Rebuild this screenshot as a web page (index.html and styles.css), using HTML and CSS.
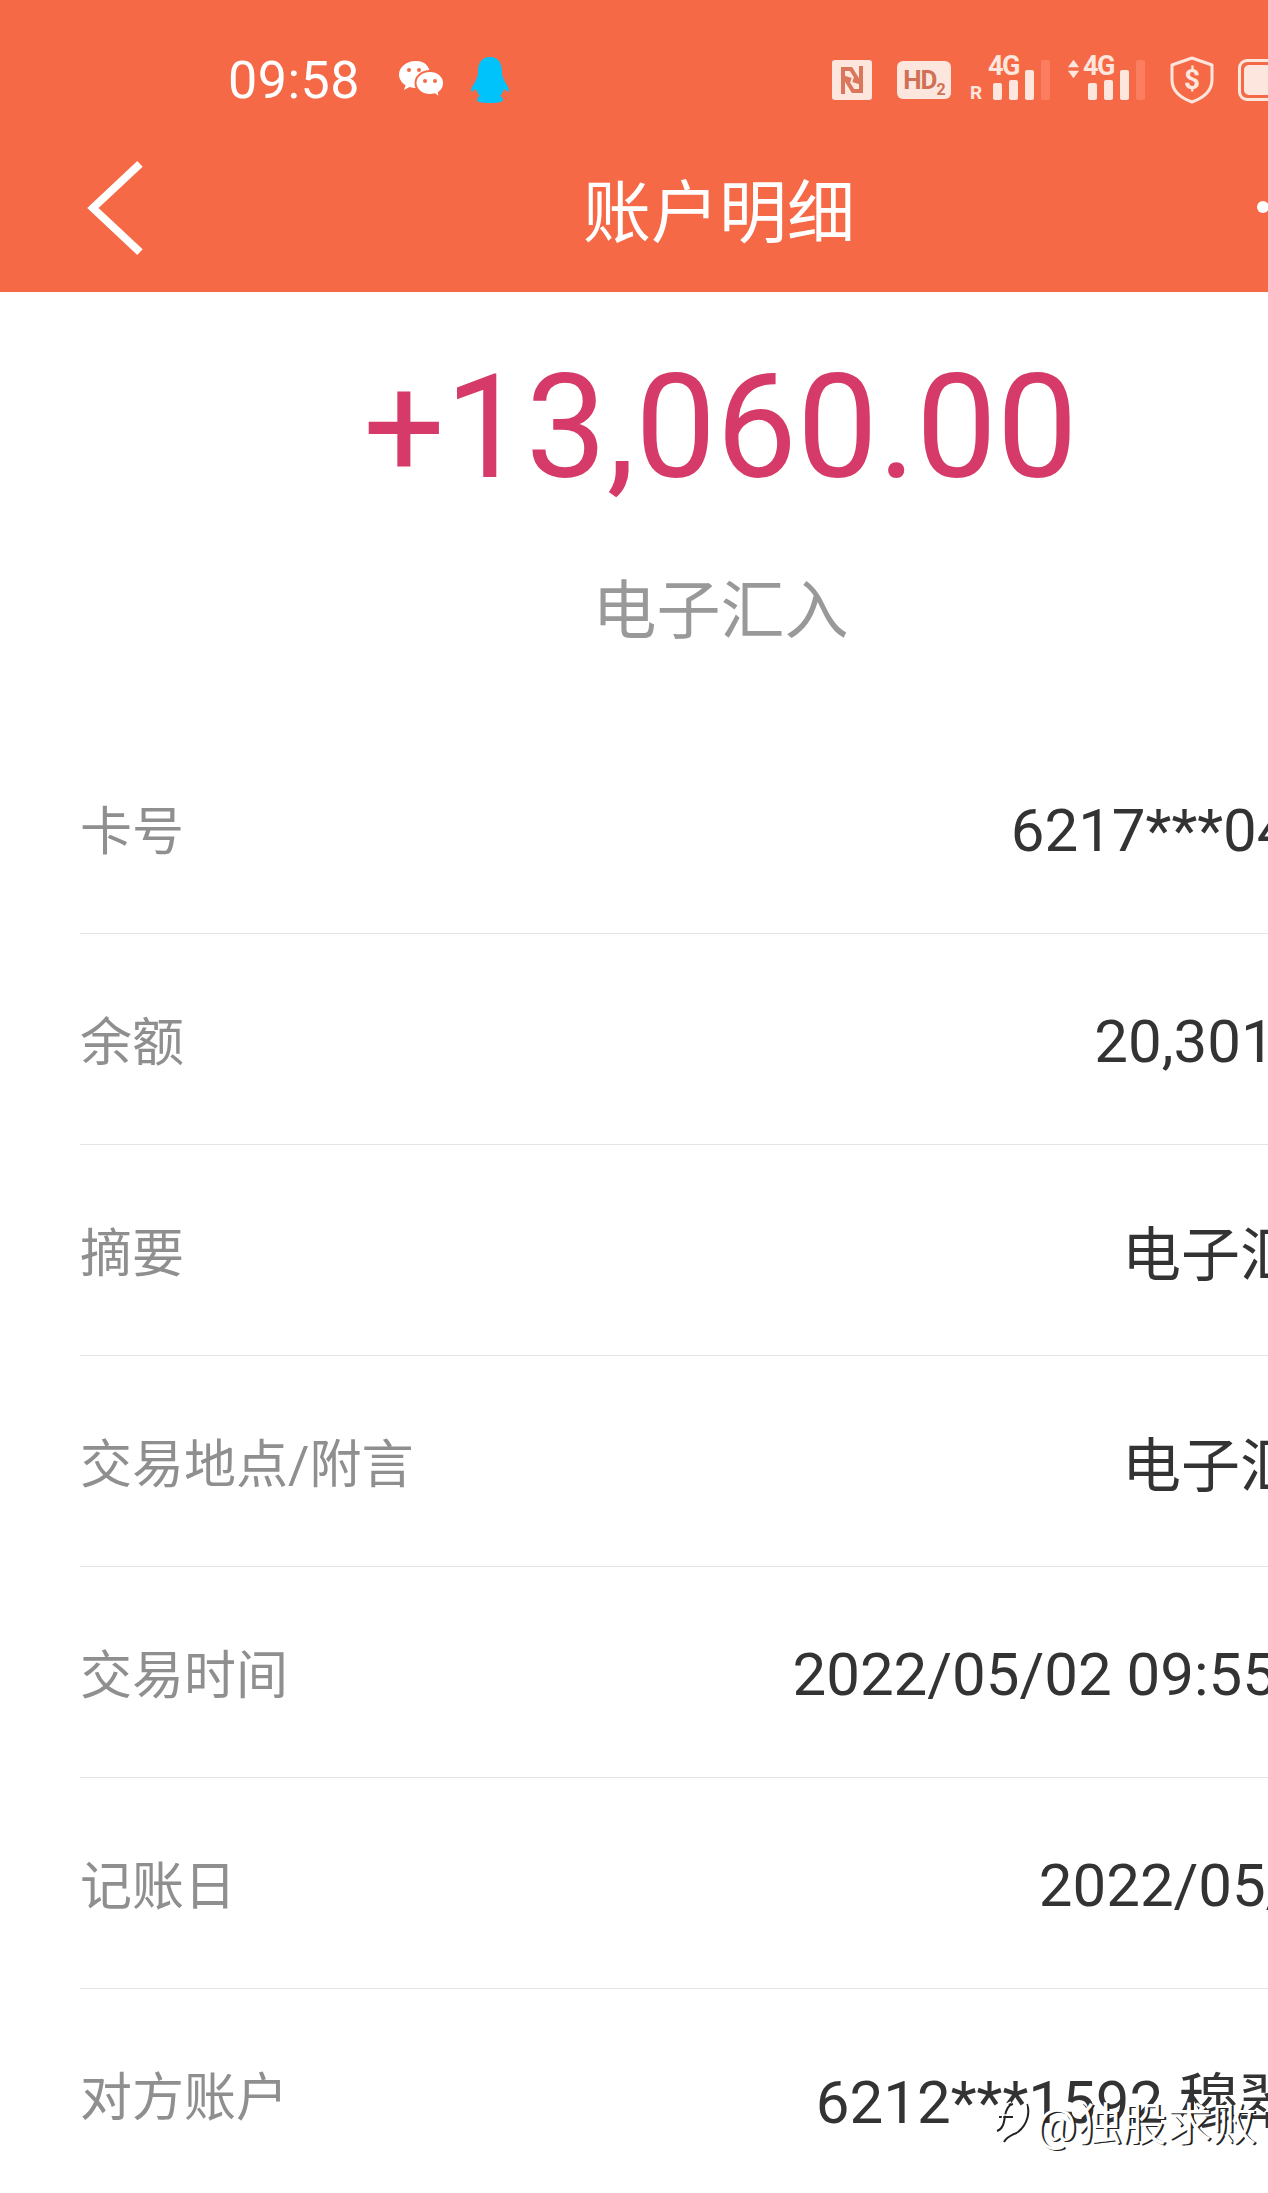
FILE: index.html
```html
<!DOCTYPE html>
<html lang="zh-CN">
<head>
    <meta charset="UTF-8">
    <title>账户明细</title>
    <link rel="stylesheet" href="styles.css">
</head>
<body>
    <div class="screen">
        <div class="header">
            <div class="statusbar">
                <div class="status-left">
                    <span class="time">09:58</span>
                    <svg class="ic-wechat" viewBox="0 0 45 38">
                        <path fill="#fff" d="M17 0C7.600 0 0 6 0 13.600c0 4.400 2.600 8.300 6.600 10.800L4.800 29l6-3c2 .6 3.900.9 6.200.9 9.400 0 14-6 14-13.300C31 6 26.400 0 17 0z"/>
                        <path fill="#fff" stroke="#f56946" stroke-width="2" d="M31 10c-8 0-14.500 5.300-14.500 12S23 34 31 34c1.700 0 3.300-.3 4.800-.7L41 37l-1.200-5.300C43 29.500 45 26 45 22c0-6.700-6-12-14-12z"/>
                        <circle cx="10" cy="9" r="2" fill="#f56946"/>
                        <circle cx="20" cy="9" r="2" fill="#f56946"/>
                        <circle cx="26" cy="20" r="2" fill="#f56946"/>
                        <circle cx="36" cy="20" r="2" fill="#f56946"/>
                    </svg>
                    <svg class="ic-qq" viewBox="0 0 38 46">
                        <path fill="#00c3fb" d="M19 0C10 0 7 7 7 15c0 4-1 6-3 10-2 3-4 6-4 9 0 1 1 1 2 0l3-2c1 3 2 5 4 7-2 1-3 2-3 4 0 2 4 3 13 3s13-1 13-3c0-2-1-3-3-4 2-2 3-4 4-7l3 2c1 1 2 1 2 0 0-3-2-6-4-9-2-4-3-6-3-10C31 7 28 0 19 0z"/>
                    </svg>
                </div>
                <div class="status-right">
                    <svg class="ic-nfc" viewBox="0 0 40 40">
                        <rect width="40" height="40" rx="3" fill="#fde6dd"/>
                        <path fill="none" stroke="#d9765c" stroke-width="4" d="M11 34V9h8l8 13-6-2M29 6v25h-8L13 18l6 2"/>
                    </svg>
                    <span class="hd-badge">HD<sub>2</sub></span>
                    <div class="signal signal-roam">
                        <span class="roam">R</span>
                        <div class="bars">
                            <span class="net">4G</span>
                            <i class="b1"></i><i class="b2"></i><i class="b3"></i><i class="b4"></i>
                        </div>
                    </div>
                    <div class="signal signal-data">
                        <svg class="ic-updown" viewBox="0 0 14 20">
                            <path fill="#fde6dd" d="M7 0l6 8H1zM7 20L1 12h12z"/>
                        </svg>
                        <div class="bars">
                            <span class="net">4G</span>
                            <i class="b1"></i><i class="b2"></i><i class="b3"></i><i class="b4"></i>
                        </div>
                    </div>
                    <svg class="ic-shield" viewBox="0 0 44 48">
                        <path fill="none" stroke="#fde6dd" stroke-width="3" stroke-linejoin="round" d="M22 2L42 9v15c0 11-9 18-20 22C11 42 2 35 2 24V9z"/>
                        <text x="22" y="33" text-anchor="middle" class="shield-text">$</text>
                    </svg>
                    <div class="battery"><div class="battery-fill"></div></div>
                </div>
            </div>
            <div class="nav">
                <svg class="ic-back" viewBox="0 0 60 100">
                    <path fill="none" stroke="#fff" stroke-width="8" d="M56 5L8 50l48 45"/>
                </svg>
                <div class="nav-title">账户明细</div>
                <div class="nav-more"></div>
            </div>
        </div>

        <div class="summary">
            <div class="amount">+13,060.00</div>
            <div class="type">电子汇入</div>
        </div>

        <div class="rows">
            <div class="row"><span class="label">卡号</span><span class="value">6217***0412</span></div>
            <div class="row"><span class="label">余额</span><span class="value">20,301.52</span></div>
            <div class="row"><span class="label">摘要</span><span class="value value-cjk">电子汇入</span></div>
            <div class="row"><span class="label">交易地点/附言</span><span class="value value-cjk">电子汇入</span></div>
            <div class="row"><span class="label">交易时间</span><span class="value">2022/05/02 09:55:21</span></div>
            <div class="row"><span class="label">记账日</span><span class="value">2022/05/02</span></div>
            <div class="row"><span class="label">对方账户</span><span class="value">6212***1592 穆翠芳</span></div>
        </div>

        <div class="watermark">
            <svg class="ic-mark" viewBox="0 0 40 44">
                <path fill="none" stroke="#222" stroke-width="2" d="M23 4c-5 1-7 6-8 12-1 7-2 13-8 15M9 17h14M37 4c3 8 1 20-9 28-5 3-11 4-14 10"/>
                <path fill="none" stroke="#fff" stroke-width="1.500" d="M21 2c-5 1-7 6-8 12-1 7-2 13-7 15M7 15h14M35 2c3 8 1 20-9 28-5 3-11 4-14 10"/>
            </svg>
            <span>@独股求败</span>
        </div>
    </div>
</body>
</html>
```

FILE: styles.css
```css
html, body {
    margin: 0;
    padding: 0;
    height: 100%;
    overflow: hidden;
    background-color: #fff;
}
.screen {
    position: relative;
    width: 1438px;
    height: 2193px;
    overflow: hidden;
    font-family: Roboto, "Noto Sans CJK SC", sans-serif;
}
.header {
    height: 292px;
    background-color: #f56946;
    box-sizing: border-box;
}
.statusbar {
    display: flex;
    align-items: center;
    height: 120px;
    padding: 40px 0 0 228px;
    box-sizing: border-box;
}
.status-left {
    display: flex;
    align-items: center;
    width: 604px;
}
.time {
    font-size: 52px;
    letter-spacing: .5px;
    color: #fff;
    width: 171px;
}
.ic-wechat {
    width: 45px;
    height: 38px;
    margin-right: 27px;
}
.ic-qq {
    width: 38px;
    height: 46px;
}
.status-right {
    display: flex;
    align-items: center;
}
.ic-nfc {
    width: 40px;
    height: 40px;
}
.hd-badge {
    width: 54px;
    height: 38px;
    line-height: 38px;
    margin-left: 25px;
    background-color: #fde6dd;
    color: #cf7057;
    border-radius: 6px;
    font-size: 26px;
    font-weight: 700;
    text-align: center;
    letter-spacing: -1px;
}
.hd-badge sub {
    font-size: 16px;
    line-height: 0;
}
.signal {
    display: flex;
    align-items: flex-start;
    height: 44px;
}
.signal-roam {
    width: 80px;
    margin-left: 19px;
    gap: 10px;
}
.signal-data {
    width: 78px;
    margin-left: 17px;
    gap: 8px;
}
.roam {
    align-self: flex-end;
    width: 13px;
    font-size: 19px;
    font-weight: 700;
    line-height: 18px;
    color: #fde6dd;
}
.ic-updown {
    width: 13px;
    height: 20px;
    margin-top: 1px;
}
.bars {
    position: relative;
    display: flex;
    align-items: flex-end;
    gap: 7px;
    height: 42px;
}
.bars i {
    display: block;
    width: 9px;
    border-radius: 2px;
    background-color: #fde6dd;
}
.bars .b1 { height: 17px; }
.bars .b2 { height: 20px; }
.bars .b3 { height: 30px; }
.bars .b4 { height: 40px; background-color: #fb7e60; }
.net {
    position: absolute;
    left: -5px;
    top: -5px;
    font-size: 27px;
    font-weight: 700;
    line-height: 26px;
    letter-spacing: -1.5px;
    color: #fde6dd;
}
.ic-shield {
    width: 44px;
    height: 48px;
    margin-left: 25px;
}
.shield-text {
    font-family: Roboto, sans-serif;
    font-size: 28px;
    font-weight: 700;
    fill: #fde6dd;
}
.battery {
    width: 70px;
    height: 42px;
    box-sizing: border-box;
    border: 3px solid #fde6dd;
    border-radius: 9px;
    padding: 3px;
    margin-left: 24px;
}
.battery-fill {
    height: 100%;
    border-radius: 5px;
    background-color: #fde6dd;
}
.nav {
    display: flex;
    align-items: center;
    justify-content: center;
    position: relative;
    height: 172px;
}
.nav-title {
    font-size: 68px;
    color: #fff;
    padding-top: 3px;
}
.ic-back {
    position: absolute;
    left: 85px;
    top: 39px;
    width: 59px;
    height: 98px;
}
.nav-more {
    position: absolute;
    left: 1257px;
    top: 81px;
    width: 12px;
    height: 12px;
    border-radius: 50%;
    background-color: #fff;
}
.summary {
    text-align: center;
    padding-left: 3px;
}
.amount {
    font-size: 144px;
    line-height: 170px;
    padding-top: 51px;
    color: #d53a68;
}
.type {
    font-size: 64px;
    line-height: 80px;
    padding-top: 59px;
    color: #999;
}
.rows {
    margin: 0 80px;
    padding-top: 71px;
}
.row {
    display: flex;
    justify-content: space-between;
    align-items: center;
    height: 210px;
    border-bottom: 1px solid #e4e4e4;
}
.row:last-child {
    border-bottom: 0;
}
.label {
    font-size: 52px;
    color: #8f8f8f;
    padding-bottom: 2px;
}
.value {
    font-size: 60px;
    color: #333;
    padding-top: 4px;
}
.value-cjk {
    font-size: 59px;
    padding-top: 0;
}
.watermark {
    position: absolute;
    left: 990px;
    top: 2089px;
    display: flex;
    align-items: center;
    gap: 6px;
    font-size: 45px;
    color: #fff;
    text-shadow: 2px 1px 0 #222;
}
.ic-mark {
    width: 40px;
    height: 44px;
}
```
